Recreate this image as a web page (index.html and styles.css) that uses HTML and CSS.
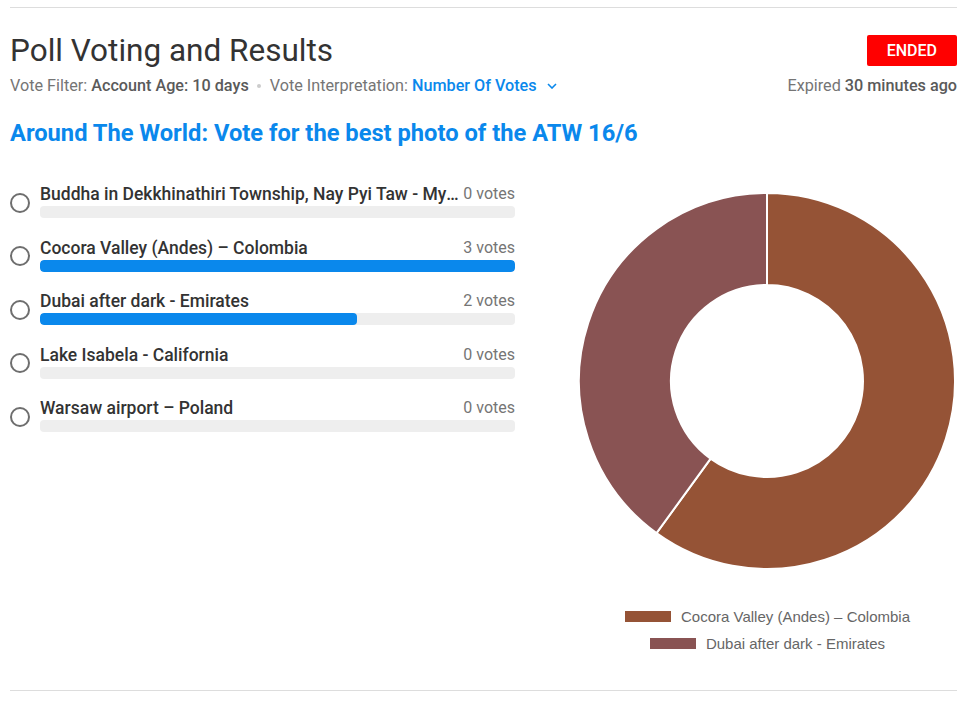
FILE: index.html
```html
<!DOCTYPE html>
<html lang="en">
<head>
<meta charset="UTF-8">
<meta name="viewport" content="width=device-width, initial-scale=1.0">
<title>Poll Voting and Results</title>
<link rel="stylesheet" href="styles.css">
</head>
<body>

<div class="poll">
    <div class="poll-header">
        <div class="header-left">
            <h1 class="poll-title">Poll Voting and Results</h1>
            <div class="poll-meta">
                <span>Vote Filter: <b>Account Age: 10 days</b></span>
                <span class="dot"></span>
                <span>Vote Interpretation: <a class="interp" href="#">Number Of Votes
                    <svg width="10" height="6" viewBox="0 0 10 6"><path d="M1 1 L5 5 L9 1" fill="none" stroke="#0a88ec" stroke-width="1.6"/></svg>
                </a></span>
            </div>
        </div>
        <div class="header-right">
            <span class="badge-ended">ENDED</span>
            <div class="expired">Expired <b>30 minutes ago</b></div>
        </div>
    </div>

    <h2 class="poll-question">Around The World: Vote for the best photo of the ATW 16/6</h2>

    <div class="poll-body">
        <div class="options">
            <div class="option">
                <span class="radio"></span>
                <div class="option-main">
                    <div class="option-line">
                        <span class="option-label">Buddha in Dekkhinathiri Township, Nay Pyi Taw - Myanmar</span>
                        <span class="option-votes">0 votes</span>
                    </div>
                    <div class="bar"><div class="bar-fill" style="width: 0%"></div></div>
                </div>
            </div>
            <div class="option">
                <span class="radio"></span>
                <div class="option-main">
                    <div class="option-line">
                        <span class="option-label">Cocora Valley (Andes) – Colombia</span>
                        <span class="option-votes">3 votes</span>
                    </div>
                    <div class="bar"><div class="bar-fill" style="width: 100%"></div></div>
                </div>
            </div>
            <div class="option">
                <span class="radio"></span>
                <div class="option-main">
                    <div class="option-line">
                        <span class="option-label">Dubai after dark - Emirates</span>
                        <span class="option-votes">2 votes</span>
                    </div>
                    <div class="bar"><div class="bar-fill" style="width: 66.67%"></div></div>
                </div>
            </div>
            <div class="option">
                <span class="radio"></span>
                <div class="option-main">
                    <div class="option-line">
                        <span class="option-label">Lake Isabela - California</span>
                        <span class="option-votes">0 votes</span>
                    </div>
                    <div class="bar"><div class="bar-fill" style="width: 0%"></div></div>
                </div>
            </div>
            <div class="option">
                <span class="radio"></span>
                <div class="option-main">
                    <div class="option-line">
                        <span class="option-label">Warsaw airport – Poland</span>
                        <span class="option-votes">0 votes</span>
                    </div>
                    <div class="bar"><div class="bar-fill" style="width: 0%"></div></div>
                </div>
            </div>
        </div>

        <div class="chart">
            <svg class="donut" width="376" height="376" viewBox="0 0 376 376">
                <path d="M188 0 A188 188 0 1 1 77.5 340.1 L131.6 265.7 A96 96 0 1 0 188 92 Z" fill="#955336" stroke="#fff" stroke-width="2"/>
                <path d="M77.5 340.1 A188 188 0 0 1 188 0 L188 92 A96 96 0 0 0 131.6 265.7 Z" fill="#895353" stroke="#fff" stroke-width="2"/>
            </svg>
            <div class="legend">
                <div class="legend-item"><span class="swatch swatch-cocora"></span>Cocora Valley (Andes) – Colombia</div>
                <div class="legend-item"><span class="swatch swatch-dubai"></span>Dubai after dark - Emirates</div>
            </div>
        </div>
    </div>
</div>

</body>
</html>
```

FILE: styles.css
```css
body {
    font-family: Roboto, "Liberation Sans", sans-serif;
    background: #fff;
    color: #333;
    margin: 0;
    padding: 0;
}

.poll {
    margin: 7px 18px 0 10px;
    border-top: 1px solid #ddd;
    border-bottom: 1px solid #ddd;
}

.poll-header {
    display: flex;
    justify-content: space-between;
    align-items: flex-start;
    padding-top: 24px;
}

.poll-title {
    font-size: 31.5px;
    line-height: 38px;
    font-weight: 400;
    margin: 0;
    color: #333;
}

.poll-meta {
    display: flex;
    align-items: center;
    margin-top: 4px;
    font-size: 16.2px;
    line-height: 24px;
    color: #757575;
}

.poll-meta b,
.expired b {
    font-weight: 500;
    color: #5a5a5a;
}

.dot {
    width: 4px;
    height: 4px;
    border-radius: 50%;
    background: #ccc;
    margin: 0 9px 0 8px;
}

.interp {
    color: #0a88ec;
    font-weight: 500;
    text-decoration: none;
}

.interp svg {
    margin-left: 6px;
    vertical-align: 2px;
}

.header-right {
    display: flex;
    flex-direction: column;
    align-items: flex-end;
    padding-top: 3px;
}

.badge-ended {
    background: #ff0000;
    color: #fff;
    font-weight: 500;
    font-size: 16px;
    line-height: 31px;
    padding: 0 20px;
    border-radius: 2px;
}

.expired {
    margin-top: 8px;
    font-size: 16.2px;
    line-height: 24px;
    color: #757575;
}

.poll-question {
    margin: 20px 0 0;
    font-size: 23.7px;
    line-height: 30px;
    font-weight: 700;
    color: #0a88ec;
}

.poll-body {
    display: grid;
    grid-template-columns: 505px 1fr;
    gap: 62px;
    margin-top: 35px;
}

.options {
    display: flex;
    flex-direction: column;
    gap: 19.5px;
    padding-top: 1px;
}

.option {
    display: flex;
    align-items: center;
}

.radio {
    flex: none;
    width: 16px;
    height: 16px;
    border: 2px solid #6e6e6e;
    border-radius: 50%;
    margin: 3px 10px 0 0;
}

.option-main {
    flex: 1;
    min-width: 0;
}

.option-line {
    display: flex;
    align-items: center;
    line-height: 20px;
}

.option-label {
    flex: 1;
    min-width: 0;
    white-space: nowrap;
    overflow: hidden;
    text-overflow: ellipsis;
    font-size: 17.5px;
    font-weight: 500;
    color: #333;
}

.option-votes {
    flex: none;
    margin-left: 4px;
    font-size: 16px;
    color: #757575;
}

.bar {
    height: 12px;
    margin-top: 2px;
    background: #eee;
    border-radius: 4px;
    overflow: hidden;
}

.bar-fill {
    height: 100%;
    background: #0a88ec;
    border-radius: 4px;
}

.chart {
    display: flex;
    flex-direction: column;
    align-items: center;
    padding-top: 10px;
}

.donut {
    display: block;
}

.legend {
    display: flex;
    flex-direction: column;
    align-items: center;
    margin: 34px 0 33px;
    font-family: "Liberation Sans", Arial, sans-serif;
    font-size: 15px;
    color: #666;
}

.legend-item {
    display: flex;
    align-items: center;
    height: 27px;
}

.swatch {
    width: 46px;
    height: 11px;
    margin-right: 9px;
    border: 1px solid #fff;
}

.swatch-cocora {
    background: #955336;
}

.swatch-dubai {
    background: #895353;
}
```
